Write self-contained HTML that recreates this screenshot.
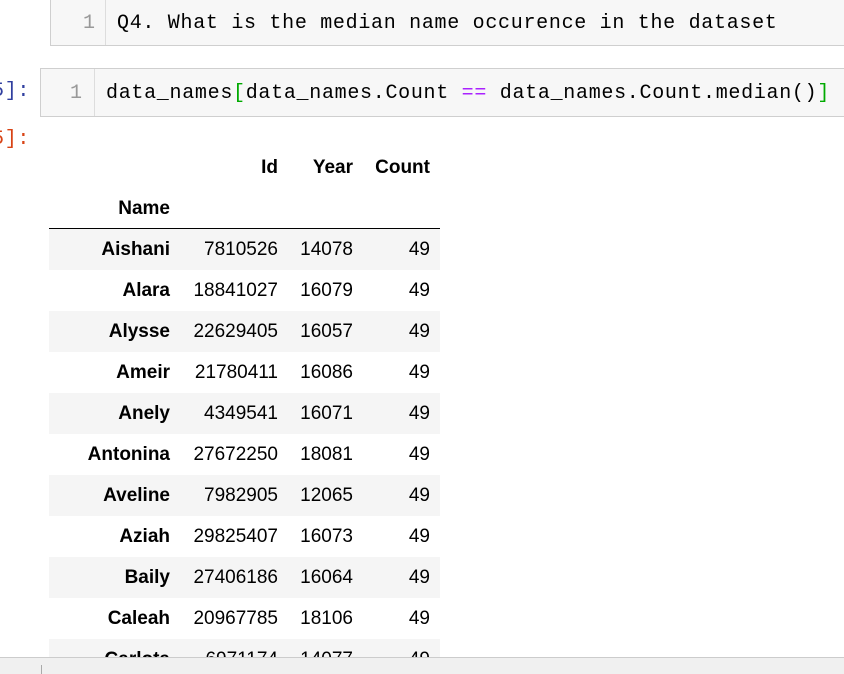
<!DOCTYPE html>
<html><head><style>
html,body{margin:0;width:844px;height:674px;overflow:hidden;background:#fff;position:relative;font-family:"Liberation Sans",Arial,sans-serif}
.cell{position:absolute;background:#f7f7f7;border:1px solid #cfcfcf;border-right:none;box-sizing:border-box}
.gut{position:absolute;top:0;bottom:0;border-right:1px solid #ddd;color:#999;font-family:"Liberation Mono",monospace;font-size:20px;text-align:right;box-sizing:border-box}
.code{position:absolute;font-family:"Liberation Mono",monospace;font-size:20px;letter-spacing:0.7px;color:#000;white-space:pre}
.p{position:absolute;font-family:"Liberation Mono",monospace;font-size:20px;letter-spacing:0.7px}
.t{position:absolute;font-size:19px;color:#000;text-align:right;white-space:nowrap}
.row{position:absolute;left:49px;width:391px;height:41px}
</style></head><body>
<div class="cell" style="left:50px;top:-2px;width:800px;height:48px">
 <div class="gut" style="left:0;width:55px;padding:11px 10px 0 0;line-height:28px">1</div>
 <div class="code" style="left:66px;top:11px;line-height:28px">Q4. What is the median name occurence in the dataset</div>
</div>
<div class="p" style="left:-8px;top:80px;color:#303f9f">5]:</div>
<div class="cell" style="left:40px;top:68px;width:810px;height:49px">
 <div class="gut" style="left:0;width:54px;padding:11px 12px 0 0;line-height:28px">1</div>
 <div class="code" style="left:65px;top:11px;line-height:28px">data_names<span style="color:#0a0">[</span>data_names.Count <span style="color:#a2f">==</span> data_names.Count.median()<span style="color:#0a0">]</span></div>
</div>
<div class="p" style="left:-8px;top:128px;color:#d84315">5]:</div>

<div class="t" style="left:200px;width:78px;top:157px;font-weight:bold">Id</div>
<div class="t" style="left:280px;width:73px;top:157px;font-weight:bold">Year</div>
<div class="t" style="left:355px;width:75px;top:157px;font-weight:bold">Count</div>
<div class="t" style="left:60px;width:110px;top:198px;font-weight:bold">Name</div>
<div style="position:absolute;left:49px;top:228px;width:391px;height:1px;background:#000"></div>
<div id="rows"></div>
<script>
var d=[["Aishani","7810526","14078"],["Alara","18841027","16079"],["Alysse","22629405","16057"],["Ameir","21780411","16086"],["Anely","4349541","16071"],["Antonina","27672250","18081"],["Aveline","7982905","12065"],["Aziah","29825407","16073"],["Baily","27406186","16064"],["Caleah","20967785","18106"],["Carlota","6971174","14077"]];
var h="";d.forEach(function(r,i){var y=229+i*41;
h+='<div class="row" style="top:'+y+'px;background:'+(i%2==0?'#f5f5f5':'#fff')+'"></div>';
var ty=y+10;
h+='<div class="t" style="left:40px;width:130px;top:'+ty+'px;font-weight:bold">'+r[0]+'</div>';
h+='<div class="t" style="left:180px;width:98px;top:'+ty+'px">'+r[1]+'</div>';
h+='<div class="t" style="left:280px;width:73px;top:'+ty+'px">'+r[2]+'</div>';
h+='<div class="t" style="left:355px;width:75px;top:'+ty+'px">49</div>';});
document.getElementById("rows").innerHTML=h;
</script>
<div style="position:absolute;left:0;top:657px;width:844px;height:17px;background:#f0f0f0;border-top:1px solid #ccc"></div>
<div style="position:absolute;left:41px;top:665px;width:1px;height:9px;background:#aaa"></div>
</body></html>
